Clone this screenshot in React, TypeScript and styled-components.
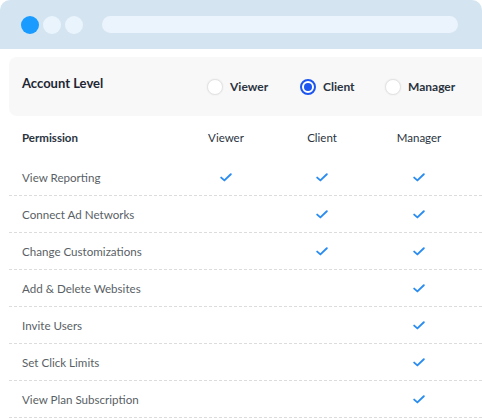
import styled, { createGlobalStyle } from "styled-components";

const GlobalStyle = createGlobalStyle`
  html, body {
    margin: 0;
    padding: 0;
    background: #ffffff;
  }
  body {
    font-family: Lato, "Open Sans", "Liberation Sans", sans-serif;
    -webkit-font-smoothing: antialiased;
  }
`;

type Level = "Viewer" | "Client" | "Manager";

const LEVELS: Level[] = ["Viewer", "Client", "Manager"];

const PERMISSIONS: { name: string; levels: Level[] }[] = [
  { name: "View Reporting", levels: ["Viewer", "Client", "Manager"] },
  { name: "Connect Ad Networks", levels: ["Client", "Manager"] },
  { name: "Change Customizations", levels: ["Client", "Manager"] },
  { name: "Add & Delete Websites", levels: ["Manager"] },
  { name: "Invite Users", levels: ["Manager"] },
  { name: "Set Click Limits", levels: ["Manager"] },
  { name: "View Plan Subscription", levels: ["Manager"] },
];

const Window = styled.div`
  width: 482px;
  height: 420px;
  overflow: hidden;
  background: #ffffff;
`;

const TitleBar = styled.div`
  height: 49px;
  background: #d4e5f1;
  border-radius: 10px 10px 0 0;
  display: flex;
  align-items: center;
  padding: 0 24px 0 21px;
  box-sizing: border-box;
`;

const Dots = styled.div`
  display: flex;
  gap: 4px;
  margin-right: 19px;
`;

const Dot = styled.span<{ $active?: boolean }>`
  width: 18px;
  height: 18px;
  border-radius: 50%;
  background: ${(p) => (p.$active ? "#1a9bff" : "#eaf4fd")};
`;

const AddressBar = styled.div`
  flex: 1;
  height: 17px;
  border-radius: 9px;
  background: #ebf4fd;
`;

const Body = styled.div`
  padding: 8px 0 0 9px;
`;

const LevelCard = styled.div`
  height: 59px;
  background: #f8f8f8;
  border-radius: 8px 0 0 8px;
  display: grid;
  grid-template-columns: 185px 93px 85px 1fr;
  align-items: center;
  padding-left: 13px;
  box-sizing: border-box;
`;

const CardTitle = styled.div`
  font-size: 13px;
  font-weight: 700;
  color: #1f2633;
  margin-top: -7px;
`;

const RadioOption = styled.label`
  display: flex;
  align-items: center;
  gap: 7px;
  font-size: 12px;
  font-weight: 700;
  color: #2b3340;
  margin-top: 0;
`;

const RadioCircle = styled.span<{ $checked?: boolean }>`
  width: 16px;
  height: 16px;
  border-radius: 50%;
  box-sizing: border-box;
  background: #ffffff;
  border: ${(p) => (p.$checked ? "2px solid #1c55ef" : "1px solid #e3e3e3")};
  box-shadow: ${(p) => (p.$checked ? "none" : "0 0 2px rgba(0,0,0,0.08)")};
  display: flex;
  align-items: center;
  justify-content: center;

  &::after {
    content: "";
    display: ${(p) => (p.$checked ? "block" : "none")};
    width: 8px;
    height: 8px;
    border-radius: 50%;
    background: #1c55ef;
  }
`;

const Table = styled.div`
  margin-top: 0;
`;

const Row = styled.div<{ $head?: boolean }>`
  display: grid;
  grid-template-columns: 174px 96px 97px 1fr;
  align-items: center;
  height: ${(p) => (p.$head ? "43px" : "37px")};
  padding-left: 13px;
  border-bottom: ${(p) => (p.$head ? "none" : "1px dashed #dcdcdc")};
  box-sizing: border-box;
`;

const HeadLabel = styled.div`
  font-size: 11.5px;
  font-weight: 700;
  color: #2a3441;
`;

const HeadCell = styled.div`
  font-size: 11.5px;
  color: #2a3441;
  text-align: center;
  width: 60px;
  justify-self: start;
`;

const Label = styled.div`
  font-size: 11.6px;
  color: #5a5f66;
`;

const Cell = styled.div`
  width: 60px;
  display: flex;
  justify-content: center;
  padding-top: 1px;
`;

function Check() {
  return (
    <svg width="12" height="9" viewBox="0 0 12 9" fill="none">
      <path d="M1.2 4.6L4.4 7.4L10.8 1.2" stroke="#2b8cf0" strokeWidth="1.9" strokeLinecap="round" strokeLinejoin="round" />
    </svg>
  );
}

export default function App() {
  const selected: Level = "Client";
  return (
    <Window>
      <GlobalStyle />
      <TitleBar>
        <Dots>
          <Dot $active />
          <Dot />
          <Dot />
        </Dots>
        <AddressBar />
      </TitleBar>
      <Body>
        <LevelCard>
          <CardTitle>Account Level</CardTitle>
          {LEVELS.map((level) => (
            <RadioOption key={level}>
              <RadioCircle $checked={level === selected} />
              {level}
            </RadioOption>
          ))}
        </LevelCard>
        <Table>
          <Row $head>
            <HeadLabel>Permission</HeadLabel>
            {LEVELS.map((level) => (
              <HeadCell key={level}>{level}</HeadCell>
            ))}
          </Row>
          {PERMISSIONS.map((perm) => (
            <Row key={perm.name}>
              <Label>{perm.name}</Label>
              {LEVELS.map((level) => (
                <Cell key={level}>{perm.levels.includes(level) ? <Check /> : null}</Cell>
              ))}
            </Row>
          ))}
        </Table>
      </Body>
    </Window>
  );
}
